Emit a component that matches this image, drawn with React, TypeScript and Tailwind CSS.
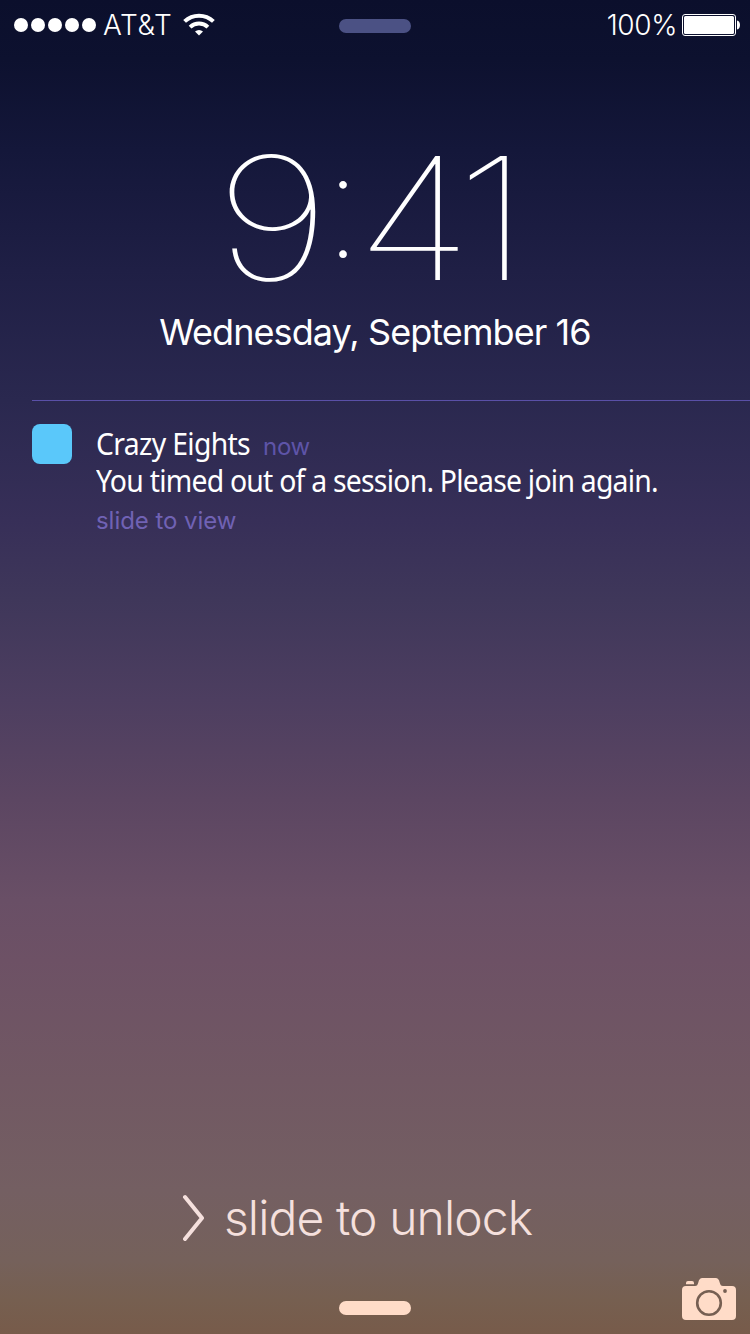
const bg =
  "bg-[linear-gradient(to_bottom,#0b0f2c_0px,#0d112f_60px,#14173a_150px,#1f1f45_270px,#2a284f_400px,#372f58_520px,#3f375a_600px,#4d3e60_700px,#5c4662_800px,#694f66_900px,#6d5165_960px,#715863_1080px,#745f62_1190px,#75615b_1260px,#765f50_1300px,#775b4a_1334px)]";

function Wifi() {
  return (
    <svg width="32" height="24" viewBox="0 0 32 24" fill="none" stroke="white" strokeWidth="4">
      <path d="M1.6 8.400a21 21 0 0 1 28.8 0" />
      <path d="M7.1 14.100a13 13 0 0 1 17.8 0" />
      <path d="M12 18.600a6 6 0 0 1 8 0L16 22.600z" fill="white" stroke="none" />
    </svg>
  );
}

function Battery() {
  return (
    <svg width="60" height="24" viewBox="0 0 60 24">
      <rect x="0.5" y="0.5" width="53" height="21" rx="2.5" fill="none" stroke="white" />
      <rect x="2" y="2" width="50" height="18" rx="1.5" fill="white" />
      <path d="M55 6.5c2 .5 3 2.200 3 4.500s-1 4-3 4.500z" fill="white" />
    </svg>
  );
}

function Camera() {
  return (
    <svg width="54" height="42" viewBox="0 0 54 42">
      <path
        fill="#ffdcc8"
        d="M4 6.200V5Q4 3 6 3h4Q12 3 12 5v1.200zM4 8h9c2 0 2.600-1 3.300-3.500C17 1.500 18 0 20.500 0h13c2.500 0 3.500 1.500 4.200 4.500C38.400 7 39 8 41 8h9a4 4 0 0 1 4 4v26a4 4 0 0 1-4 4H4a4 4 0 0 1-4-4V12a4 4 0 0 1 4-4z"
      />
      <circle cx="27" cy="25" r="11.800" fill="none" stroke="#765f52" strokeWidth="2.600" />
      <circle cx="43" cy="13" r="1.900" fill="#765f52" />
    </svg>
  );
}

export default function App() {
  return (
    <main className={`flex h-[1334px] w-[750px] flex-col overflow-hidden font-['Inter',sans-serif] text-white ${bg}`}>
      <header className="grid h-[50px] shrink-0 grid-cols-[339px_72px_1fr]">
        <div className="flex h-[50px] items-center pl-[14px]">
          <div className="flex gap-[3px]">
            {[0, 1, 2, 3, 4].map((n) => (
              <span key={n} className="size-[14px] rounded-full bg-white" />
            ))}
          </div>
          <span className="ml-[7px] w-[80px] text-[28px] leading-[49px] font-[330] tracking-[0.6px] whitespace-nowrap">AT&amp;T</span>
          <Wifi />
        </div>
        <div className="mt-[19px] h-[14px] rounded-full bg-[#4b5184]" />
        <div className="flex h-[50px] justify-end pr-[8px]">
          <span className="mr-[5px] text-[28px] leading-[50px] font-[330] tracking-[-0.4px]">100%</span>
          <div className="mt-[14px]">
            <Battery />
          </div>
        </div>
      </header>

      <section className="flex h-[350px] shrink-0 flex-col items-center">
        <time className="mt-[64px] ml-[222px] flex h-[196px] self-start text-[171px] leading-[208px] font-[120]">
          <span className="flex w-[101px] scale-x-[1.19] justify-center">9</span>
          <span className="flex w-[40px] justify-center text-[148px] leading-[179px] font-[140]">:</span>
          <span className="flex w-[102px] scale-x-[1.14] justify-center">4</span>
          <span className="flex w-[55px] scale-x-[1.18] justify-center">1</span>
        </time>
        <p className="text-[36px] leading-[44px] font-[370] tracking-[-0.92px] whitespace-nowrap">Wednesday, September 16</p>
      </section>

      <section className="ml-8 flex h-[150px] shrink-0 border-t border-[#5a50a8] pt-[23px]">
        <div className="size-10 rounded-[8px] bg-[#5ac8fa]" />
        <div className="ml-6">
          <div className="flex h-[38px]">
            <h2 className="w-[155px] origin-left scale-x-[0.945] font-['Noto_Sans',sans-serif] text-[30px] leading-[39px] font-[450] tracking-[-0.7px] whitespace-nowrap">
              Crazy Eights
            </h2>
            <span className="ml-[12px] text-[24px] leading-[46px] tracking-[-0.3px] text-[#5e54a8]">now</span>
          </div>
          <p className="h-[38px] w-[562px] origin-left scale-x-[0.945] font-['Noto_Sans',sans-serif] text-[30px] leading-[38px] font-[450] tracking-[-0.8px] whitespace-nowrap">
            You timed out of a session. Please join again.
          </p>
          <p className="text-[24px] leading-[42px] tracking-[-0.05px] text-[#7062b4]">slide to view</p>
        </div>
      </section>

      <footer className="mt-auto flex h-[154px] flex-col">
        <div className="flex h-[76px] items-center pl-[182px] text-[#f5e0dd]">
          <svg width="22" height="48" viewBox="0 0 22 48" fill="none" stroke="currentColor" strokeWidth="4" strokeLinecap="round" strokeLinejoin="round">
            <path d="M3 3l17 21L3 45" />
          </svg>
          <span className="ml-[20px] text-[48px] leading-[76px] font-[350] tracking-[-0.9px] whitespace-nowrap">slide to unlock</span>
        </div>
        <div className="grid flex-1 grid-cols-[339px_72px_1fr] pr-[14px]">
          <div />
          <div className="mt-[45px] h-[14px] rounded-full bg-[#ffdcc8]" />
          <div className="mt-[22px] justify-self-end">
            <Camera />
          </div>
        </div>
      </footer>
    </main>
  );
}
